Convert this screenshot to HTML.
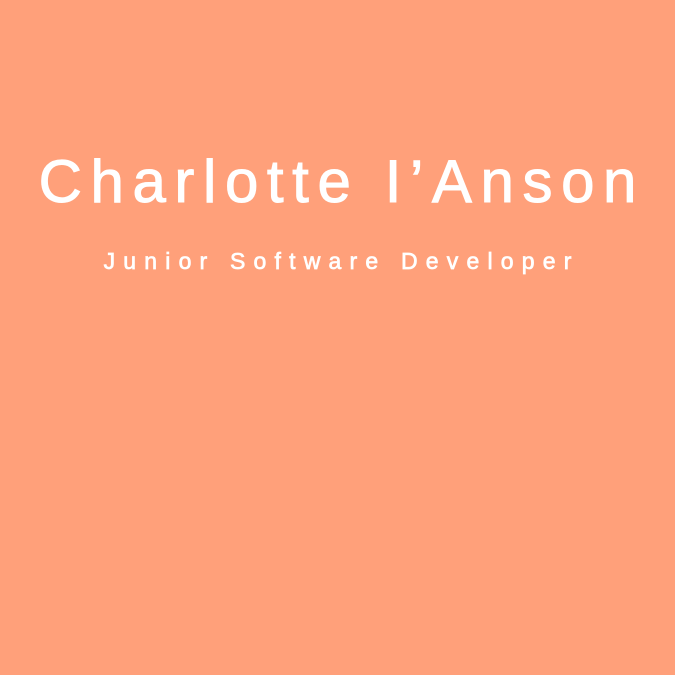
<!DOCTYPE html>
<html><head><style>
html,body{margin:0;padding:0;width:675px;height:675px;background:#ffa07a;overflow:hidden}
h1{position:absolute;top:147px;left:0;width:675px;text-align:center;margin:0;font-family:"Liberation Sans",sans-serif;font-weight:400;font-size:60px;letter-spacing:8.6px;text-indent:8.6px;color:#fff;line-height:70px;-webkit-text-stroke:1px #fff}
p{position:absolute;top:247px;left:0;width:675px;text-align:center;margin:0;font-family:"Liberation Sans",sans-serif;font-weight:400;font-size:23px;letter-spacing:8.2px;text-indent:8.2px;color:#fff;line-height:28px;-webkit-text-stroke:0.7px #fff}
</style></head><body>
<h1>Charlotte I’Anson</h1>
<p>Junior Software Developer</p>
</body></html>
